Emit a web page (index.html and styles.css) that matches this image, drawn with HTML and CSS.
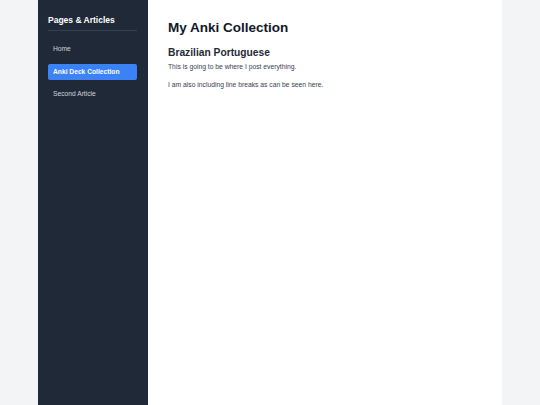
FILE: index.html
```html
<!DOCTYPE html>
<html lang="en">
<head>
<meta charset="utf-8">
<title>My Anki Collection</title>
<link rel="stylesheet" href="styles.css">
</head>
<body>
<div class="layout">
  <aside class="sidebar">
    <h2 class="sidebar-title">Pages &amp; Articles</h2>
    <nav class="nav">
      <a class="nav-link" href="#">Home</a>
      <a class="nav-link active" href="#">Anki Deck Collection</a>
      <a class="nav-link" href="#">Second Article</a>
    </nav>
  </aside>
  <main class="content">
    <h1 class="page-title">My Anki Collection</h1>
    <h2 class="section-title">Brazilian Portuguese</h2>
    <p class="text">This is going to be where I post everything.</p>
    <p class="text spaced">I am also including line breaks as can be seen here.</p>
  </main>
</div>
</body>
</html>
```
FILE: styles.css
```css
html, body {
  margin: 0;
  padding: 0;
  background: #f3f4f6;
  font-family: "Liberation Sans", Arial, sans-serif;
}
.layout {
  width: 464px;
  margin: 0 auto;
  display: flex;
  min-height: 100vh;
}
.sidebar {
  width: 110px;
  flex: none;
  box-sizing: border-box;
  background: #1f2937;
  padding: 14px 11px 10px 10px;
}
.sidebar-title {
  margin: 0;
  color: #ffffff;
  font-size: 8.5px;
  font-weight: 700;
  line-height: 12px;
  padding-bottom: 4px;
  border-bottom: 1px solid #374151;
}
.nav {
  display: flex;
  flex-direction: column;
  gap: 6.5px;
  margin-top: 10px;
}
.nav-link {
  display: block;
  color: #d1d5db;
  text-decoration: none;
  font-size: 6.7px;
  line-height: 10px;
  padding: 3px 5px;
  border-radius: 2px;
}
.nav-link.active {
  background: #3b82f6;
  color: #ffffff;
  font-weight: 700;
}
.content {
  flex: 1;
  background: #ffffff;
  padding: 18px 20px;
}
.page-title {
  margin: 0;
  color: #111827;
  font-size: 13.5px;
  line-height: 20px;
  font-weight: 700;
}
.section-title {
  margin: 9px 0 0;
  color: #1f2937;
  font-size: 10.25px;
  line-height: 12px;
  font-weight: 700;
}
.text {
  margin: 3px 0 0;
  color: #374151;
  font-size: 6.75px;
  line-height: 9px;
}
.text.spaced {
  margin-top: 8.5px;
}
```
